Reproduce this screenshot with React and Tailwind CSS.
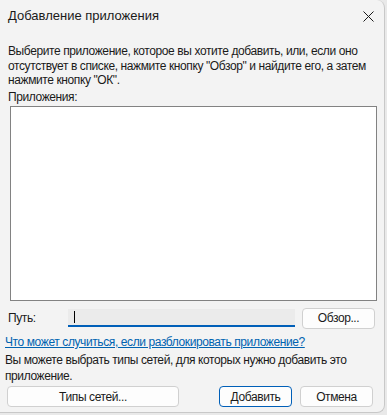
import React from 'react';

// Close glyph for the title bar
function CloseIcon() {
    return (
        <svg width="11" height="11" viewBox="0 0 11 11" className="block">
            <path d="M0.5 0.5 L10.5 10.5 M10.5 0.5 L0.5 10.5" stroke="#1a1a1a" strokeWidth="1" fill="none" />
        </svg>
    );
}

function DialogButton({ children, primary = false, className = '' }) {
    return (
        <button
            className={`h-[21px] rounded-[4px] bg-[#fdfdfd] text-[12px] leading-none text-[#1a1a1a] ${
                primary ? 'border border-[#005fb8]' : 'border border-[#d0d0d0]'
            } ${className}`}
        >
            {children}
        </button>
    );
}

function App() {
    return (
        <div
            className="w-[387px] h-[415px] bg-[#e9e9e9] overflow-hidden tracking-[-0.4px]"
            style={{ fontFamily: '"Liberation Sans", Arial, sans-serif' }}
        >
            <div className="w-[385px] h-[413px] bg-[#f3f3f3] border border-[#c8c8c8] border-l-0 border-t-0 rounded-br-[8px] rounded-tr-[8px] flex flex-col text-[12px] text-[#1a1a1a]">
                {/* Title bar */}
                <div className="h-[32px] flex items-center justify-between pl-[8px] pr-[10px]">
                    <span className="text-[13px] tracking-normal">Добавление приложения</span>
                    <CloseIcon />
                </div>

                {/* Description */}
                <div className="px-[8px] pt-[12px] leading-[14.5px] whitespace-nowrap">
                    Выберите приложение, которое вы хотите добавить, или, если оно
                    <br />
                    отсутствует в списке, нажмите кнопку "Обзор" и найдите его, а затем
                    <br />
                    нажмите кнопку "ОК".
                </div>
                <div className="px-[8px] pt-[2px] leading-[14.5px]">Приложения:</div>

                {/* App list */}
                <div className="ml-[10px] mt-[2px] w-[367px] h-[195px] bg-white border border-[#828282]" />

                {/* Path row */}
                <div className="flex items-center mt-[7px] px-[8px] h-[20px]">
                    <span className="w-[60px]">Путь:</span>
                    <div className="w-[227px] h-[18px] bg-[#ebebeb] border-b-[2px] border-[#005fb8] flex items-center pl-[6px]">
                        <div className="w-[1px] h-[12px] bg-black" />
                    </div>
                    <DialogButton className="ml-[7px] w-[73px]">Обзор...</DialogButton>
                </div>

                {/* Link */}
                <div className="px-[5px] mt-[7px] leading-[14px]">
                    <a className="text-[#0063b1] underline">
                        Что может случиться, если разблокировать приложение?
                    </a>
                </div>

                <div className="px-[5px] mt-[3px] leading-[16px] whitespace-nowrap">
                    Вы можете выбрать типы сетей, для которых нужно добавить это
                    <br />
                    приложение.
                </div>

                {/* Bottom buttons */}
                <div className="flex items-center mt-[2px] px-[7px]">
                    <DialogButton className="w-[172px]">Типы сетей...</DialogButton>
                    <div className="flex-1" />
                    <DialogButton primary className="w-[73px]">Добавить</DialogButton>
                    <DialogButton className="ml-[8px] w-[73px]">Отмена</DialogButton>
                    <div className="w-[4px]" />
                </div>
            </div>
        </div>
    );
}

export default App;
